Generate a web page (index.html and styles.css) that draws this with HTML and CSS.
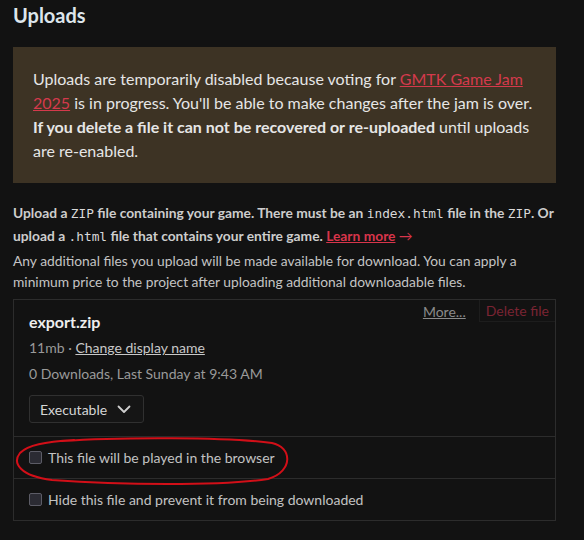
FILE: index.html
```html
<!DOCTYPE html>
<html>
<head>
<meta charset="utf-8">
<link rel="stylesheet" href="styles.css">
</head>
<body>
<div class="page">
  <h2 class="title">Uploads</h2>
  <div class="notice">
    Uploads are temporarily disabled because voting for <a href="#" class="red-link">GMTK Game Jam 2025</a> is in progress. You'll be able to make changes after the jam is over. <strong>If you delete a file it can not be recovered or re-uploaded</strong> until uploads are re-enabled.
  </div>
  <p class="instructions">Upload a <code>ZIP</code> file containing your game. There must be an <code>index.html</code> file in the <code>ZIP</code>. Or upload a <code>.html</code> file that contains your entire game. <a href="#" class="learn">Learn more</a> <span class="arrow">→</span></p>
  <p class="extra">Any additional files you upload will be made available for download. You can apply a minimum price to the project after uploading additional downloadable files.</p>

  <div class="file-card">
    <div class="actions">
      <a href="#" class="more">More...</a>
      <span class="delete">Delete file</span>
    </div>
    <div class="file-main">
      <div class="file-name">export.zip</div>
      <div class="meta">11mb · <a href="#" class="meta-link">Change display name</a></div>
      <div class="meta">0 Downloads, Last Sunday at 9:43 AM</div>
      <div class="select">Executable
        <svg class="chev" width="14" height="9" viewBox="0 0 14 9"><path d="M1.5 1.5 L7 7 L12.5 1.5" fill="none" stroke="#cfcfcf" stroke-width="1.8" stroke-linecap="round" stroke-linejoin="round"/></svg>
      </div>
    </div>
    <label class="check-row"><span class="box"></span>This file will be played in the browser</label>
    <label class="check-row"><span class="box"></span>Hide this file and prevent it from being downloaded</label>
  </div>

  <svg class="annotation" width="584" height="540" viewBox="0 0 584 540">
    <path d="M62 441 C120 437 228 437 272 443 C292 447 294 471 268 479 C220 486 120 485 52 480 C20 476 12 463 20 453 C28 445 44 442 74 440" fill="none" stroke="#d20f18" stroke-width="2" stroke-linecap="round"/>
  </svg>
</div>
</body>
</html>
```

FILE: styles.css
```css
html, body {
  margin: 0;
  padding: 0;
  background: #121212;
}
body {
  font-family: Lato, "Open Sans", sans-serif;
  color: #ccc;
}
.page {
  position: relative;
  width: 543px;
  padding: 0 28px 0 13px;
  height: 540px;
  overflow: hidden;
}
.title {
  margin: 3px 0 20px;
  font-size: 20px;
  line-height: 24px;
  font-weight: 700;
  color: #dde5eb;
}
.notice {
  background: #3d3324;
  padding: 20px;
  font-size: 16px;
  line-height: 24px;
  color: #e6e6e6;
}
.notice strong {
  font-weight: 700;
}
.red-link {
  color: #d43a4c;
  text-decoration: underline;
}
.instructions {
  margin: 19px 0 0;
  font-size: 13.8px;
  line-height: 22px;
  font-weight: 700;
  color: #cdcdcd;
}
code {
  font-family: "DejaVu Sans Mono", "Liberation Mono", monospace;
  font-size: 12.8px;
  font-weight: 400;
  color: #d8d8d8;
}
.learn {
  color: #d8354b;
  text-decoration: underline;
}
.arrow {
  color: #d8354b;
  font-weight: 400;
}
.extra {
  margin: 2px 0 0;
  font-size: 13.8px;
  line-height: 21px;
  color: #c4c4c4;
}
.file-card {
  position: relative;
  margin-top: 7px;
  border: 1px solid #2c2c2c;
}
.actions {
  position: absolute;
  top: 0;
  right: 0;
  display: flex;
  align-items: center;
  gap: 13px;
}
.more {
  font-size: 14px;
  color: #8a8a8a;
  text-decoration: underline;
}
.delete {
  display: block;
  font-size: 14px;
  line-height: 21px;
  padding: 0 6px 0 6px;
  color: #7a2432;
  border: 1px solid #1d1d1d;
  border-top: none;
  border-right: none;
}
.file-main {
  padding: 9px 15px 13px 15px;
}
.file-name {
  font-size: 16px;
  font-weight: 700;
  line-height: 26px;
  color: #eeeeee;
}
.meta {
  font-size: 14px;
  line-height: 26px;
  color: #9a9a9a;
}
.meta-link {
  color: #c8c8c8;
  text-decoration: underline;
}
.select {
  margin-top: 8px;
  display: inline-flex;
  align-items: center;
  gap: 10px;
  height: 26px;
  padding: 0 12px 0 10px;
  border: 1px solid #303030;
  border-radius: 3px;
  background: #151515;
  font-size: 14px;
  color: #d6d6d6;
}
.chev {
  display: block;
}
.check-row {
  display: flex;
  align-items: center;
  gap: 6px;
  height: 41px;
  padding: 0 15px;
  border-top: 1px solid #2c2c2c;
  font-size: 14px;
  color: #c2c2c2;
}
.box {
  display: block;
  width: 11px;
  height: 11px;
  border: 1px solid #5c5c66;
  border-radius: 2px;
  background: #2b2b33;
}
.annotation {
  position: absolute;
  left: 0;
  top: 0;
  pointer-events: none;
}
```
